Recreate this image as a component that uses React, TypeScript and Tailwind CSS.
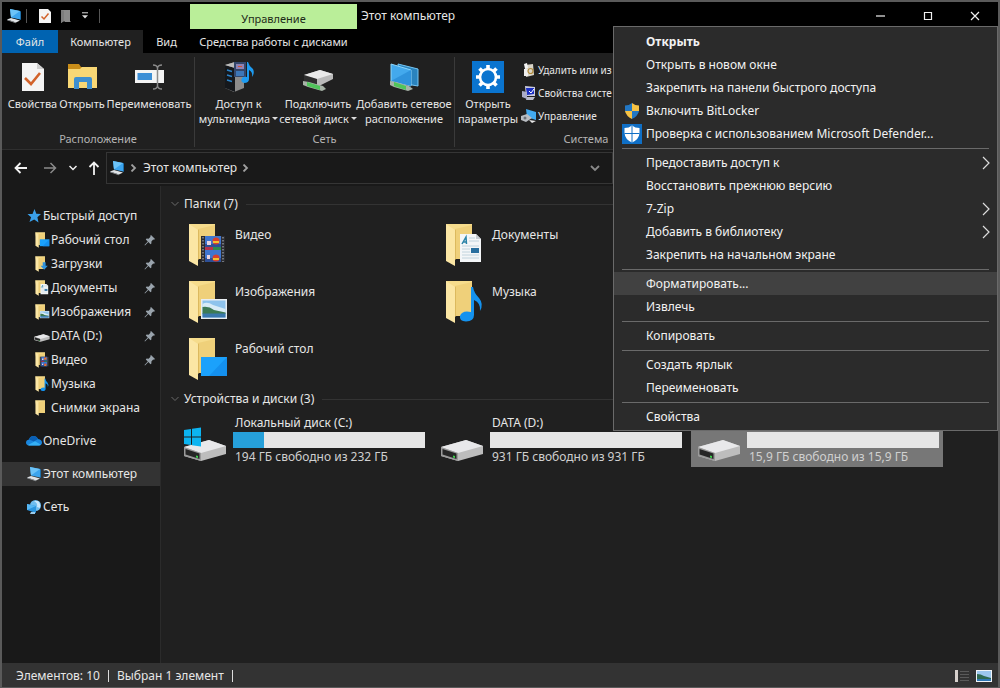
import type { ReactNode } from 'react'

type FolderKind = 'video' | 'docs' | 'downloads' | 'pictures' | 'music' | 'desktop' | 'plain'

const folderRows: { name: string; kind: FolderKind }[][] = [
  [
    { name: 'Видео', kind: 'video' },
    { name: 'Документы', kind: 'docs' },
  ],
  [
    { name: 'Изображения', kind: 'pictures' },
    { name: 'Музыка', kind: 'music' },
  ],
  [{ name: 'Рабочий стол', kind: 'desktop' }],
]

const drives = [
  { name: 'Локальный диск (C:)', info: '194 ГБ свободно из 232 ГБ', used: 16, system: true, selected: false },
  { name: 'DATA (D:)', info: '931 ГБ свободно из 931 ГБ', used: 0, system: false, selected: false },
  { name: '', info: '15,9 ГБ свободно из 15,9 ГБ', used: 0, system: false, selected: true },
]

const quickAccess: { name: string; icon: ReactNode; pinned: boolean }[] = [
  { name: 'Рабочий стол', icon: <SmallFolder kind="desktop" />, pinned: true },
  { name: 'Загрузки', icon: <SmallFolder kind="downloads" />, pinned: true },
  { name: 'Документы', icon: <SmallFolder kind="docs" />, pinned: true },
  { name: 'Изображения', icon: <SmallFolder kind="pictures" />, pinned: true },
  { name: 'DATA (D:)', icon: <DriveIcon className="h-4 w-4" />, pinned: true },
  { name: 'Видео', icon: <SmallFolder kind="video" />, pinned: true },
  { name: 'Музыка', icon: <SmallFolder kind="music" />, pinned: false },
  { name: 'Снимки экрана', icon: <SmallFolder kind="plain" />, pinned: false },
]

type MenuEntry = { label: string; icon?: ReactNode; bold?: boolean; sub?: boolean; active?: boolean }

const menuGroups: MenuEntry[][] = [
  [
    { label: 'Открыть', bold: true },
    { label: 'Открыть в новом окне' },
    { label: 'Закрепить на панели быстрого доступа' },
    { label: 'Включить BitLocker', icon: <UacShield /> },
    { label: 'Проверка с использованием Microsoft Defender...', icon: <DefenderIcon /> },
  ],
  [
    { label: 'Предоставить доступ к', sub: true },
    { label: 'Восстановить прежнюю версию' },
    { label: '7-Zip', sub: true },
    { label: 'Добавить в библиотеку', sub: true },
    { label: 'Закрепить на начальном экране' },
  ],
  [{ label: 'Форматировать...', active: true }, { label: 'Извлечь' }],
  [{ label: 'Копировать' }],
  [{ label: 'Создать ярлык' }, { label: 'Переименовать' }],
  [{ label: 'Свойства' }],
]

function App() {
  return (
    <div className="relative flex min-h-screen flex-col overflow-hidden border-t-2 border-r-2 border-b border-l-2 border-[#5a5a5a] bg-[#202020] font-['Noto_Sans','Open_Sans',sans-serif] text-xs leading-4 text-[#e6e6e6]">
      <TitleBar />
      <Ribbon />
      <AddressBar />
      <div className="flex flex-1">
        <Sidebar />
        <main className="min-w-0 flex-1 pt-2 pl-4">
          <SectionTitle>Папки (7)</SectionTitle>
          <div className="mt-1">
            {folderRows.map((row, i) => (
              <div key={i} className="grid grid-cols-[repeat(3,252px)] gap-x-[5px]">
                {row.map((f) => (
                  <button key={f.name} type="button" className="flex h-[57px] items-start pt-1.5 pl-3 text-left">
                    <BigFolder kind={f.kind} />
                    <span className="mt-[3px] ml-1">{f.name}</span>
                  </button>
                ))}
              </div>
            ))}
          </div>
          <SectionTitle>Устройства и диски (3)</SectionTitle>
          <div className="mt-0.5 grid grid-cols-[repeat(3,252px)] gap-x-[5px]">
            {drives.map((d) => (
              <button
                key={d.info}
                type="button"
                className={`flex items-start px-1 pt-1 text-left ${d.selected ? 'bg-[#777777]' : ''}`}
              >
                <span className="mt-2 w-[52px] pl-0.5">
                  <DriveIcon className="h-11 w-11" system={d.system} />
                </span>
                <span className="flex-1">
                  <span className="block h-4 pl-0.5">{d.name}</span>
                  <span className="mt-px block h-4 bg-[#e6e6e6]">
                    <span className="block h-4 bg-[#26a0da]" style={{ width: `${d.used}%` }} />
                  </span>
                  <span className="mt-px block pl-0.5 text-[#d0d0d0]">{d.info}</span>
                </span>
              </button>
            ))}
          </div>
        </main>
      </div>
      <StatusBar />
      <ContextMenu />
    </div>
  )
}

function TitleBar() {
  return (
    <header className="bg-black">
      <div className="flex h-7 items-center">
        <div className="flex w-[188px] items-center pl-1">
          <PcIcon className="h-4 w-4" />
          <span className="ml-1 h-3.5 w-px bg-[#555555]" />
          <svg viewBox="0 0 12 14" className="ml-3 h-3.5 w-3">
            <path d="M0 0H9L12 3V14H0Z" fill="#f4f4f4" />
            <path d="M2.5 7.5L5 10L9.5 4.5" fill="none" stroke="#d2622a" strokeWidth="1.5" />
          </svg>
          <svg viewBox="0 0 10 14" className="ml-2.5 h-3.5 w-2.5">
            <path d="M0 1H9V12L10 13H4L3 12L0 14Z" fill="#8a8a8a" />
            <path d="M0 1L3 2V12L0 14Z" fill="#7c7c7c" />
          </svg>
          <svg viewBox="0 0 8 8" className="ml-2.5 h-2 w-2">
            <path d="M1 .8H7" stroke="#ddd" />
            <path d="M1 3.2H7L4 6.4Z" fill="#ddd" />
          </svg>
          <span className="ml-2.5 h-3.5 w-px bg-[#555555]" />
        </div>
        <div className="mt-px flex h-[25px] w-[167px] items-center justify-center bg-[#baee99] pt-1 text-[11px] text-[#1e2b18]">
          Управление
        </div>
        <h1 className="ml-1">Этот компьютер</h1>
        <div className="ml-auto flex h-7">
          <WindowButton label="Свернуть">
            <path d="M0 5H9" />
          </WindowButton>
          <WindowButton label="Развернуть">
            <path d="M1.5 1.5H8.5V8.5H1.5Z" />
          </WindowButton>
          <WindowButton label="Закрыть">
            <path d="M1 1L9 9M9 1L1 9" />
          </WindowButton>
        </div>
      </div>
      <nav className="flex h-[23px] text-[11px]">
        <button type="button" className="w-14 bg-[#0063b1]">
          Файл
        </button>
        <button type="button" className="w-[85px] bg-[#202020]">
          Компьютер
        </button>
        <button type="button" className="w-[47px]">
          Вид
        </button>
        <button type="button" className="w-[167px] whitespace-nowrap">
          Средства работы с дисками
        </button>
      </nav>
    </header>
  )
}

function WindowButton({ label, children }: { label: string; children: ReactNode }) {
  return (
    <button type="button" aria-label={label} className="flex w-[47px] items-center justify-center">
      <svg viewBox="0 0 10 10" className="h-2.5 w-2.5" fill="none" stroke="#f0f0f0" strokeWidth="1.2">
        {children}
      </svg>
    </button>
  )
}

function Ribbon() {
  return (
    <section className="flex h-[97px] items-stretch border-b border-[#2f2f2f] pt-1 pb-0.5 text-[11px]">
      <RibbonGroup title="Расположение" width="w-[193px]">
        <RibbonButton label="Свойства" width="w-[57px]">
          <svg viewBox="0 0 32 32" className="h-8 w-8">
            <path d="M5 2H20L27 8V30H5Z" fill="#f4f4f4" />
            <path d="M20 2V8H27Z" fill="#cfcfcf" />
            <path d="M8 17L14 23L23 12" fill="none" stroke="#d2622a" strokeWidth="2.6" />
          </svg>
        </RibbonButton>
        <RibbonButton label="Открыть" width="w-[42px]">
          <svg viewBox="0 0 32 32" className="h-8 w-8">
            <path d="M2 3H13L15 6H30V27H2Z" fill="#c98d19" />
            <path d="M2 8H14L16 6H31V27H2Z" fill="#f8d775" />
            <path d="M8 28V18Q8 16 10 16H24Q26 16 26 18V28H21V21H13V28Z" fill="#3f8fcf" />
          </svg>
        </RibbonButton>
        <RibbonButton label="Переименовать" width="w-[92px]">
          <svg viewBox="0 0 32 32" className="h-8 w-8">
            <path d="M2 9H31V22H2Z" fill="#f4f4f4" />
            <path d="M4.500 12H19V19H4.500Z" fill="#3c8fd6" />
            <path d="M20 4Q24 4 24.500 7Q25 4 29 4M24.500 6V26M20 28Q24 28 24.500 25Q25 28 29 28" fill="none" stroke="#8b8b8b" strokeWidth="1.500" />
          </svg>
        </RibbonButton>
      </RibbonGroup>
      <RibbonGroup title="Сеть" width="w-[260px]">
        <RibbonButton label="Доступ к" label2="мультимедиа" arrow width="w-[83px]">
          <svg viewBox="0 0 32 32" className="h-8 w-8">
            <path d="M2 4L12 1L21 4V27L11 31L2 27Z" fill="#8c8c8c" />
            <path d="M2 4L12 7V31L2 27Z" fill="#15181c" />
            <path d="M2 4L12 1L21 4L12 7Z" fill="#bcbcbc" />
            <path d="M4 9L9 10.500M4 14L9 15.500M4 19L9 20.500" stroke="#2a83c9" strokeWidth="1.500" />
            <path d="M11 1H23V16H11Z" fill="#34476b" />
            <path d="M13 3H21V8H13Z" fill="#8d82b4" />
            <path d="M13 10H21V15H13Z" fill="#3d77b8" />
            <path d="M15 5H19V6H15Z" fill="#d3542f" />
            <path d="M25 1Q26 5 30 8Q32 12 29 16Q30 11 26 9V18Q26 22 21 22Q17 21 19 17Q21 15 24 16V1Z" fill="#1d9bf0" />
          </svg>
        </RibbonButton>
        <RibbonButton label="Подключить" label2="сетевой диск" arrow width="w-[76px]">
          <svg viewBox="0 0 32 32" className="h-8 w-8">
            <path d="M2 14L18 9L31 13V18L17 25L2 21Z" fill="#b9b9b9" />
            <path d="M2 14L18 9L31 13L15 18Z" fill="#e9e9e9" />
            <path d="M2 14L15 18V24L2 21Z" fill="#2e2e2e" />
            <path d="M1 20L7 21L21 25L24 28L20 30L6 26L1 24Z" fill="#a7b3a7" />
            <path d="M5 21L18 25V29L5 25Z" fill="#4fc55a" />
          </svg>
        </RibbonButton>
        <RibbonButton label="Добавить сетевое" label2="расположение" width="w-[96px]">
          <svg viewBox="0 0 32 32" className="h-8 w-8">
            <path d="M10 3L30 8V25L12 22Z" fill="#2a83bd" stroke="#75c6f4" />
            <path d="M3 3L23 9V25L3 20Z" fill="#43a9ed" stroke="#8dd6fb" />
            <path d="M3 20L23 9L23 25Z" fill="#2f93dc" />
            <path d="M2 20L8 21L21 25L25 28L20 30L6 26L2 24Z" fill="#a7b3a7" />
            <path d="M6 21L18 25V29L6 25Z" fill="#4fc55a" />
          </svg>
        </RibbonButton>
      </RibbonGroup>
      <RibbonGroup title="Система" width="w-[263px]">
        <RibbonButton label="Открыть" label2="параметры" width="w-[62px]">
          <svg viewBox="0 0 32 32" className="h-8 w-8">
            <path d="M0 0H32V32H0Z" fill="#0a74cf" />
            <circle cx="16" cy="16" r="8" fill="none" stroke="#fff" strokeWidth="2.600" />
            <g stroke="#fff" strokeWidth="3.600">
              <path d="M16 4V8M16 24V28M4 16H8M24 16H28" />
              <path d="M7.500 7.500L10.300 10.300M21.700 21.700L24.500 24.500M7.500 24.500L10.300 21.700M21.700 10.300L24.500 7.500" />
            </g>
          </svg>
        </RibbonButton>
        <div className="ml-0.5 flex flex-col pt-px text-[10px]">
          <RibbonLink label="Удалить или из">
            <svg viewBox="0 0 16 16" className="h-4 w-4">
              <path d="M4 3L12 2L13 13L5 15Z" fill="#d8d4c8" />
              <path d="M3 2L6 1L7 6L4 7Z" fill="#f4f4f4" />
              <path d="M3 7H7V14H3Z" fill="#efefef" />
              <circle cx="9.500" cy="9" r="2.500" fill="none" stroke="#b18a3a" strokeWidth="1.200" />
            </svg>
          </RibbonLink>
          <RibbonLink label="Свойства систе">
            <svg viewBox="0 0 16 16" className="h-4 w-4">
              <path d="M4 1L14 2V11L5 11Z" fill="#c9cbe0" />
              <path d="M5 3L13 3V9L6 10Z" fill="#1b2fc4" />
              <path d="M1 6L6 7V14L1 12Z" fill="#a9abc7" />
              <path d="M6 12H14L12 15H5Z" fill="#b7b9c9" />
              <path d="M8 6L10 8L13 4" fill="none" stroke="#fff" />
            </svg>
          </RibbonLink>
          <RibbonLink label="Управление">
            <svg viewBox="0 0 16 16" className="h-4 w-4">
              <path d="M5 1L15 4V12L6 9Z" fill="#42aaf0" />
              <path d="M0 8L6 6L11 10L5 14L0 12Z" fill="#b9bdc2" />
              <path d="M8 12L15 13L11 15Z" fill="#e8e8e8" />
              <circle cx="4" cy="10" r="1.500" fill="#6b7076" />
            </svg>
          </RibbonLink>
        </div>
      </RibbonGroup>
    </section>
  )
}

function RibbonGroup({ title, width, children }: { title: string; width: string; children: ReactNode }) {
  return (
    <div className={`flex shrink-0 flex-col border-r border-[#3a3a3a] ${width}`}>
      <div className="flex flex-1 pl-0.5">{children}</div>
      <div className="text-center text-[#b4b4b4]">{title}</div>
    </div>
  )
}

function RibbonButton({
  label,
  label2,
  arrow,
  width,
  children,
}: {
  label: string
  label2?: string
  arrow?: boolean
  width: string
  children: ReactNode
}) {
  return (
    <button type="button" className={`flex shrink-0 flex-col items-center pt-1 leading-[15px] whitespace-nowrap ${width}`}>
      {children}
      <span className="mt-[3px]">{label}</span>
      {label2 && (
        <span className="flex items-center gap-0.5">
          {label2}
          {arrow && <span className="border-x-[3px] border-t-[3px] border-x-transparent border-t-[#dddddd]" />}
        </span>
      )}
    </button>
  )
}

function RibbonLink({ label, children }: { label: string; children: ReactNode }) {
  return (
    <button type="button" className="flex h-[23px] items-center gap-px whitespace-nowrap">
      {children}
      {label}
    </button>
  )
}

function AddressBar() {
  return (
    <div className="flex h-9 items-start bg-[#191919] pt-0.5">
      <div className="flex h-8 w-[104px] items-center text-[#f2f2f2]">
        <button type="button" aria-label="Назад" className="ml-3">
          <svg viewBox="0 0 14 14" className="h-3.5 w-3.5" fill="none" stroke="currentColor" strokeWidth="1.800">
            <path d="M13 7H1.500M6.500 2L1.500 7L6.500 12" />
          </svg>
        </button>
        <button type="button" aria-label="Вперед" className="ml-[15px] text-[#8a8a8a]">
          <svg viewBox="0 0 14 14" className="h-3.5 w-3.5" fill="none" stroke="currentColor" strokeWidth="1.500">
            <path d="M1 7H12.500M7.500 2L12.500 7L7.500 12" />
          </svg>
        </button>
        <button type="button" aria-label="Последние расположения" className="ml-3">
          <svg viewBox="0 0 8 8" className="h-2 w-2" fill="none" stroke="currentColor" strokeWidth="1.500">
            <path d="M.5 2L4 5.500L7.500 2" />
          </svg>
        </button>
        <button type="button" aria-label="Вверх" className="ml-2.5">
          <svg viewBox="0 0 14 14" className="h-3.5 w-3.5" fill="none" stroke="currentColor" strokeWidth="1.800">
            <path d="M7 14V1.500M2.500 6L7 1.500L11.500 6" />
          </svg>
        </button>
      </div>
      <div className="flex h-8 flex-1 items-center border border-[#353535] pl-0.5">
        <PcIcon className="h-4 w-4" />
        <Chevron className="ml-1 h-2 w-2 text-[#a0a0a0]" />
        <button type="button" className="mr-1 ml-1.5">
          Этот компьютер
        </button>
        <Chevron className="h-2 w-2 text-[#a0a0a0]" />
        <button type="button" aria-label="Показать список" className="mr-3 ml-auto">
          <svg viewBox="0 0 10 10" className="h-2.5 w-2.5" fill="none" stroke="#8a8a8a" strokeWidth="1.800">
            <path d="M1 3L5 7L9 3" />
          </svg>
        </button>
      </div>
      <button type="button" aria-label="Обновить" className="h-8 w-8 border-y border-r border-[#353535]" />
      <input aria-label="Поиск" className="mx-1 h-8 w-[345px] border border-[#353535]" />
    </div>
  )
}

function Sidebar() {
  return (
    <aside className="w-[159px] shrink-0 border-r border-[#2b2b2b] bg-[#191919] pt-[18px]">
      <SidebarRow label="Быстрый доступ" indent="pl-6">
        <svg viewBox="0 0 16 16" className="h-4 w-4">
          <path d="M8.500 1L10.300 5.700L15 6L11.400 9.200L12.500 14.500L8.200 11.600L3.500 14L5.100 9.200L1.500 6H6.500Z" fill="#3aa0ea" />
        </svg>
      </SidebarRow>
      {quickAccess.map((item) => (
        <SidebarRow key={item.name} label={item.name} indent="pl-8" pinned={item.pinned}>
          {item.icon}
        </SidebarRow>
      ))}
      <div className="mt-[9px]">
        <SidebarRow label="OneDrive" indent="pl-6">
          <svg viewBox="0 0 16 16" className="h-4 w-4">
            <path d="M3 12.500Q0 12 0 9.500Q0 7 3 6.500Q4 3 7.500 3Q10.500 3 12 6Q16 6.500 16 9.700Q16 12 13 12.500Z" fill="#1a86dd" />
            <path d="M3 6.500Q4 3 7.500 3Q10.500 3 12 6L8 8.500Z" fill="#0a5fb4" />
            <path d="M2 12L9 8.200L15 11.700Q14 12.500 13 12.500H3Z" fill="#35b0f5" />
          </svg>
        </SidebarRow>
      </div>
      <div className="mt-[9px] bg-[#333333]">
        <SidebarRow label="Этот компьютер" indent="pl-6">
          <PcIcon className="h-4 w-4" />
        </SidebarRow>
      </div>
      <div className="mt-[9px]">
        <SidebarRow label="Сеть" indent="pl-6">
          <svg viewBox="0 0 16 16" className="h-4 w-4">
            <circle cx="9.500" cy="6.500" r="5.500" fill="#6fbdf0" />
            <path d="M8 2Q12 4 11 8L14 9Q15 5 12 2Z" fill="#c9e6fb" />
            <path d="M1 5L10 7V14L1 11Z" fill="#2b95df" />
            <path d="M1 5L10 7L1 11Z" fill="#57b8f5" />
            <path d="M5 13H9V15H4Z" fill="#9bcbea" />
          </svg>
        </SidebarRow>
      </div>
    </aside>
  )
}

function SidebarRow({
  label,
  indent,
  pinned,
  children,
}: {
  label: string
  indent: string
  pinned?: boolean
  children: ReactNode
}) {
  return (
    <button type="button" className={`flex h-6 w-full items-center whitespace-nowrap ${indent}`}>
      {children}
      <span className="ml-px">{label}</span>
      {pinned && (
        <svg viewBox="0 0 12 12" className="mr-1 ml-auto h-3 w-3" fill="#9aa4ad">
          <path d="M7 1L11 5L10 5.800L9.200 5.500L7.400 7.500L7.400 9.500L6.500 10.200L4.400 8.100L1 11.500L.5 11L3.800 7.500L1.800 5.500L2.600 4.600L4.600 4.700L6.500 2.800L6.200 1.900Z" />
        </svg>
      )}
    </button>
  )
}

function SectionTitle({ children }: { children: ReactNode }) {
  return (
    <h2 className="-ml-1.5 flex h-5 items-center">
      <svg viewBox="0 0 8 8" className="h-2 w-2" fill="none" stroke="#6a6a6a">
        <path d="M.5 2L4 5.500L7.500 2" />
      </svg>
      <span className="mr-2 ml-[5px]">{children}</span>
      <span className="h-px flex-1 bg-[#333333]" />
    </h2>
  )
}

function StatusBar() {
  return (
    <footer className="flex h-6 items-center bg-[#333333] pt-px pr-1.5 pl-3.5">
      <span>Элементов: 10</span>
      <span className="mx-2 h-3 w-px bg-[#dddddd]" />
      <span>Выбран 1 элемент</span>
      <span className="mx-2 h-3 w-px bg-[#dddddd]" />
      <button type="button" aria-label="Таблица" className="ml-auto">
        <svg viewBox="0 0 16 14" className="h-3.5 w-4">
          <path d="M1 1H4V13H1Z" fill="#d6d0cc" />
          <path d="M6 2.500H15M6 5.500H15M6 8.500H15M6 11.500H15" stroke="#5a5a5a" />
        </svg>
      </button>
      <button type="button" aria-label="Крупные значки" className="ml-1.5">
        <svg viewBox="0 0 16 12" className="h-3 w-4">
          <path d="M0 0H16V12H0Z" fill="#f0f4f8" />
          <path d="M1 1H15V11H1Z" fill="#9cc7ee" />
          <path d="M1 4Q5 4 8 6L15 8V9H1Z" fill="#2f6a52" />
          <path d="M1 9H15V11H1Z" fill="#2f77b5" />
        </svg>
      </button>
    </footer>
  )
}

function ContextMenu() {
  return (
    <div role="menu" className="absolute top-6 right-0 w-[385px] border border-[#6a6a6a] bg-[#2b2b2b] pt-[3px] pb-0.5 text-[#f2f2f2]">
      {menuGroups.map((group, i) => (
        <div key={i}>
          {i > 0 && (
            <div className="flex h-1.5 items-center px-2">
              <span className="h-px flex-1 bg-[#6a6a6a]" />
            </div>
          )}
          {group.map((entry) => (
            <button
              key={entry.label}
              type="button"
              role="menuitem"
              className={`flex h-[23px] w-full items-center whitespace-nowrap ${entry.active ? 'bg-[#414141]' : ''} ${entry.bold ? 'font-bold' : ''}`}
            >
              <span className="flex w-8 justify-center pl-1">{entry.icon}</span>
              {entry.label}
              {entry.sub && (
                <svg viewBox="0 0 8 14" className="mr-[7px] ml-auto h-3.5 w-2" fill="none" stroke="#dddddd" strokeWidth="1.200">
                  <path d="M1 1L7 7L1 13" />
                </svg>
              )}
            </button>
          ))}
        </div>
      ))}
    </div>
  )
}

function Chevron({ className }: { className: string }) {
  return (
    <svg viewBox="0 0 8 8" className={className} fill="none" stroke="currentColor" strokeWidth="1.800">
      <path d="M2.500 .5L6 4L2.500 7.500" />
    </svg>
  )
}

function PcIcon({ className }: { className: string }) {
  return (
    <svg viewBox="0 0 16 16" className={className}>
      <path d="M4 1L14 3V11.500L5 9.500Z" fill="#3ba4ee" />
      <path d="M4 1L14 3L5 9.500Z" fill="#6cc3f8" />
      <path d="M14 3L15 3.500V12L14 11.500Z" fill="#1c6fab" />
      <path d="M1 11.500L5 10L14 12.500L10 14.500Z" fill="#dfe3e6" />
      <path d="M1 11.500L10 14.500V15.200L1 12.300Z" fill="#9ba0a4" />
    </svg>
  )
}

function DriveIcon({ className, system }: { className: string; system?: boolean }) {
  return (
    <svg viewBox="0 0 44 44" className={className}>
      <path d="M1 24L26 17L43 23V31L18 38L1 33Z" fill="#bdbdbd" />
      <path d="M1 24L26 17L43 23L18 30Z" fill="#e8e8ea" />
      <path d="M1 24L18 30V38L1 33Z" fill="#9a9a9a" />
      <path d="M2.500 26L16.500 30.500V36L2.500 31.500Z" fill="#262626" />
      <path d="M13 32.500L15 33V35L13 34.500Z" fill="#3fd24e" />
      {system && (
        <g fill="#0cb4f1">
          <path d="M1 7L8 6V13.500H1ZM9 5.800L18 4.500V13.500H9ZM1 14.500H8V22L1 21ZM9 14.500H18V23.500L9 22.200Z" />
        </g>
      )}
    </svg>
  )
}

function Overlay({ kind }: { kind: FolderKind }) {
  switch (kind) {
    case 'video':
      return (
        <g>
          <path d="M12 12H36V38H12Z" fill="#2c2c30" />
          <path d="M16 12H32V24H16ZM16 26H32V38H16Z" fill="#3f76cf" />
          <path d="M16 20H32V24H16ZM16 34H32V38H16Z" fill="#2d4f96" />
          <circle cx="27" cy="17" r="3.500" fill="#d8402c" />
          <circle cx="27" cy="34" r="3.500" fill="#d8402c" />
          <path d="M24 17H30V19H24ZM24 34H30V36H24Z" fill="#f2c230" />
          <path d="M18 17H22V21H18ZM18 31H21V35H18Z" fill="#e6d4e0" />
          <path d="M16 23H24V26H16Z" fill="#b5324c" />
          <path d="M24 23H32V26H24Z" fill="#2c8a50" />
          <path d="M14 13V38M34 13V38" stroke="#8b8e94" strokeWidth="1.500" strokeDasharray="1.500 1.500" />
        </g>
      )
    case 'docs':
      return (
        <g>
          <path d="M14 10H30L35 15V38H14Z" fill="#f4f6f8" />
          <path d="M30 10V15H35Z" fill="#c6ccd2" />
          <path d="M16 20L20 13L20.500 20M17.500 18H20.500" fill="none" stroke="#2a83a8" strokeWidth="1.500" />
          <path d="M23 14H29M23 17H33M16 22H33M16 25H24M16 28H24M16 31H33M16 34H33" stroke="#b5cbd6" strokeWidth=".8" />
          <path d="M25 24H33V29H25Z" fill="#2a6f9f" />
        </g>
      )
    case 'downloads':
      return <path d="M20 16H28V26H34L24 37L14 26H20Z" fill="#2f93dc" />
    case 'pictures':
      return (
        <g>
          <path d="M12 18H38V38H12Z" fill="#e9eef2" />
          <path d="M13.500 19.500H36.500V36.500H13.500Z" fill="#8ec3ec" />
          <path d="M13.500 23Q18 20 24 24L36.500 28V32H13.500Z" fill="#d8ebf6" />
          <path d="M13.500 26Q20 25 25 29L36.500 31.500V33H13.500Z" fill="#3d7a55" />
          <path d="M13.500 32.500H36.500V36.500H13.500Z" fill="#3a78ae" />
        </g>
      )
    case 'music':
      return (
        <path
          d="M25 6H27Q28 12 33 17Q38 23 34 30Q35 22 28 19V34Q28 40 20 40.500Q13 40 14 35Q16 29 25 31Z"
          fill="#1492ee"
        />
      )
    case 'desktop':
      return (
        <g>
          <path d="M12 19H38V38H12Z" fill="#1ba1fb" />
          <path d="M38 19V38H20Z" fill="#1490ee" />
        </g>
      )
    default:
      return null
  }
}

function FolderBody() {
  return (
    <g>
      <path d="M0 0H26V35H4Z" fill="#f6dc8c" />
      <path d="M9 5L26 1V35H9Z" fill="#efd07a" />
      <path d="M0 0L9 6V42L0 37Z" fill="#fbe6a4" />
      <path d="M9 6L10 5.500V35L9 36Z" fill="#dcb95e" />
    </g>
  )
}

function BigFolder({ kind }: { kind: FolderKind }) {
  return (
    <svg viewBox="0 0 42 42" className="h-[42px] w-[42px] shrink-0">
      <FolderBody />
      <Overlay kind={kind} />
    </svg>
  )
}

function SmallFolder({ kind }: { kind: FolderKind }) {
  return (
    <svg viewBox="-4 -1 44 44" className="h-4 w-4">
      <FolderBody />
      <Overlay kind={kind} />
    </svg>
  )
}

const shieldQuarters = [
  { d: 'M8 0V8H1V2.500Q5 2.500 8 0Z', color: '#2277c4' },
  { d: 'M8 0V8H15V2.500Q11 2.500 8 0Z', color: '#f6c244' },
  { d: 'M1 8H8V16Q2 13 1 8Z', color: '#f6c244' },
  { d: 'M15 8H8V16Q14 13 15 8Z', color: '#2277c4' },
]

function UacShield() {
  return (
    <svg viewBox="0 0 16 16" className="h-4 w-4">
      {shieldQuarters.map((q) => (
        <path key={q.d} d={q.d} fill={q.color} />
      ))}
    </svg>
  )
}

function DefenderIcon() {
  return (
    <svg viewBox="0 0 20 20" className="h-5 w-5">
      <path d="M0 0H20V20H0Z" fill="#0f6fc6" />
      <path d="M10 1.500Q13 4 17.500 4V9Q17 15.500 10 18.500Q3 15.500 2.500 9V4Q7 4 10 1.500Z" fill="#ffffff" />
      <path d="M10 2V18.500M2.500 9.500H17.500" stroke="#0f6fc6" />
    </svg>
  )
}

export default App
